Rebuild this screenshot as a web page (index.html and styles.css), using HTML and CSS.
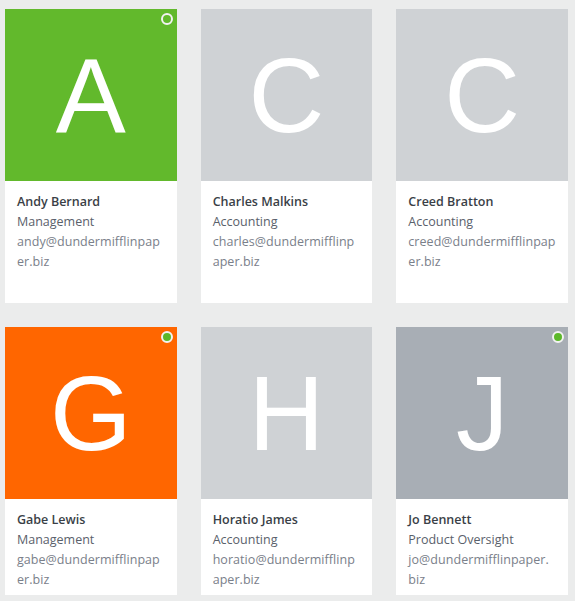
FILE: index.html
```html
<!DOCTYPE html>
<html lang="en">
<head>
<meta charset="utf-8">
<title>Contacts</title>
<link rel="stylesheet" href="styles.css">
</head>
<body>
<div class="grid">
  <div class="card">
    <div class="avatar green"><span class="letter">A</span><span class="status away"></span></div>
    <div class="info">
      <div class="name">Andy Bernard</div>
      <div class="dept">Management</div>
      <div class="email">andy@dundermifflinpaper.biz</div>
    </div>
  </div>
  <div class="card">
    <div class="avatar light"><span class="letter">C</span></div>
    <div class="info">
      <div class="name">Charles Malkins</div>
      <div class="dept">Accounting</div>
      <div class="email">charles@dundermifflinpaper.biz</div>
    </div>
  </div>
  <div class="card">
    <div class="avatar light"><span class="letter">C</span></div>
    <div class="info">
      <div class="name">Creed Bratton</div>
      <div class="dept">Accounting</div>
      <div class="email">creed@dundermifflinpaper.biz</div>
    </div>
  </div>
  <div class="card">
    <div class="avatar orange"><span class="letter">G</span><span class="status online"></span></div>
    <div class="info">
      <div class="name">Gabe Lewis</div>
      <div class="dept">Management</div>
      <div class="email">gabe@dundermifflinpaper.biz</div>
    </div>
  </div>
  <div class="card">
    <div class="avatar light"><span class="letter">H</span></div>
    <div class="info">
      <div class="name">Horatio James</div>
      <div class="dept">Accounting</div>
      <div class="email">horatio@dundermifflinpaper.biz</div>
    </div>
  </div>
  <div class="card">
    <div class="avatar dark"><span class="letter">J</span><span class="status online"></span></div>
    <div class="info">
      <div class="name">Jo Bennett</div>
      <div class="dept">Product Oversight</div>
      <div class="email">jo@dundermifflinpaper.biz</div>
    </div>
  </div>
</div>
</body>
</html>
```
FILE: styles.css
```css
html, body {
  margin: 0;
  padding: 0;
  background: #ebecec;
}
body {
  font-family: "Open Sans", Lato, sans-serif;
}
.grid {
  display: grid;
  grid-template-columns: repeat(3, 1fr);
  grid-template-rows: 294px 268px;
  column-gap: 24px;
  row-gap: 24px;
  width: 563px;
  padding: 9px 0 0 5px;
}
.card {
  background: #ffffff;
  display: flex;
  flex-direction: column;
}
.avatar {
  position: relative;
  height: 172px;
  display: flex;
  align-items: center;
  justify-content: center;
}
.green { background: #62b92c; }
.orange { background: #ff6600; }
.light { background: #cfd2d5; }
.dark { background: #a8aeb5; }
.letter {
  font-family: "Liberation Sans", Arial, sans-serif;
  font-size: 105px;
  line-height: 1;
  color: #ffffff;
}
.status {
  position: absolute;
  top: 4px;
  right: 4px;
  width: 8px;
  height: 8px;
  border: 2px solid #f2f2f2;
  border-radius: 50%;
  box-sizing: content-box;
}
.status.online { background: #5cb82a; }
.status.away { background: transparent; }
.info {
  padding: 11px 12px 0 12px;
  font-size: 12.5px;
  line-height: 20px;
}
.name {
  font-weight: 600;
  color: #3a3f47;
}
.dept {
  color: #5a616b;
}
.email {
  color: #7a808a;
  letter-spacing: 0.05px;
  word-break: break-all;
}
```
